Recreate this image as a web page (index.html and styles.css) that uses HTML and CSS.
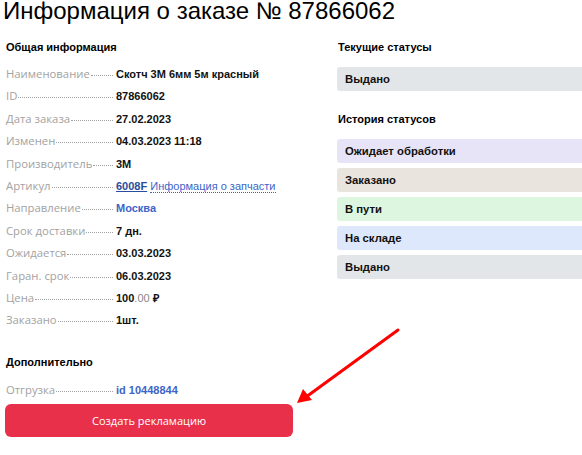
FILE: index.html
```html
<!DOCTYPE html>
<html lang="ru">
<head>
    <meta charset="UTF-8">
    <meta name="viewport" content="width=device-width, initial-scale=1.0">
    <title>Информация о заказе</title>
    <link rel="stylesheet" href="styles.css">
</head>
<body>
    <div class="page">
        <h1>Информация о заказе № 87866062</h1>
        <div class="columns">
            <div class="col-left">
                <h3>Общая информация</h3>
                <div class="rows">
                    <div class="row"><span class="label"><span>Наименование</span><i></i></span><span class="value">Скотч 3М 6мм 5м красный</span></div>
                    <div class="row"><span class="label"><span>ID</span><i></i></span><span class="value">87866062</span></div>
                    <div class="row"><span class="label"><span>Дата заказа</span><i></i></span><span class="value">27.02.2023</span></div>
                    <div class="row"><span class="label"><span>Изменен</span><i></i></span><span class="value">04.03.2023 11:18</span></div>
                    <div class="row"><span class="label"><span>Производитель</span><i></i></span><span class="value">3M</span></div>
                    <div class="row"><span class="label"><span>Артикул</span><i></i></span><span class="value"><a href="#" class="art">6008F</a> <a href="#" class="info">Информация о запчасти</a></span></div>
                    <div class="row"><span class="label"><span>Направление</span><i></i></span><span class="value link">Москва</span></div>
                    <div class="row"><span class="label"><span>Срок доставки</span><i></i></span><span class="value">7 дн.</span></div>
                    <div class="row"><span class="label"><span>Ожидается</span><i></i></span><span class="value">03.03.2023</span></div>
                    <div class="row"><span class="label"><span>Гаран. срок</span><i></i></span><span class="value">06.03.2023</span></div>
                    <div class="row"><span class="label"><span>Цена</span><i></i></span><span class="value">100<span class="cents">.00</span> ₽</span></div>
                    <div class="row"><span class="label"><span>Заказано</span><i></i></span><span class="value">1шт.</span></div>
                </div>

                <h3 class="extra">Дополнительно</h3>
                <div class="rows">
                    <div class="row"><span class="label"><span>Отгрузка</span><i></i></span><span class="value link">id 10448844</span></div>
                </div>
                <button class="btn">Создать рекламацию</button>
            </div>

            <div class="col-right">
                <h3>Текущие статусы</h3>
                <div class="status gray">Выдано</div>

                <h3 class="history">История статусов</h3>
                <div class="status-list">
                    <div class="status violet">Ожидает обработки</div>
                    <div class="status beige">Заказано</div>
                    <div class="status green">В пути</div>
                    <div class="status blue">На складе</div>
                    <div class="status gray">Выдано</div>
                </div>
            </div>
        </div>

        <!-- стрелка-указатель на кнопку -->
        <svg class="arrow" width="582" height="455" viewBox="0 0 582 455">
            <line x1="398" y1="330" x2="306" y2="397" stroke="#f00" stroke-width="3" stroke-linecap="round"/>
            <polygon points="297,403 303,389 312,400" fill="#f00"/>
        </svg>
    </div>
</body>
</html>
```

FILE: styles.css
```css
body {
    margin: 0;
    padding: 0;
    background: #ffffff;
    font-family: 'Liberation Sans', Arial, sans-serif;
    color: #111;
    overflow: hidden;
}

.page {
    position: relative;
    width: 582px;
    height: 455px;
    overflow: hidden;
}

h1 {
    margin: -3px 0 0 3px;
    font-size: 24px;
    font-weight: normal;
    line-height: 28px;
    color: #000;
    white-space: nowrap;
}

.columns {
    display: flex;
    margin-top: 15px;
}

.col-left {
    width: 288px;
    padding-left: 5px;
    flex-shrink: 0;
}

.col-right {
    width: 280px;
    margin-left: 44px;
    flex-shrink: 0;
}

h3 {
    margin: 0;
    font-size: 11px;
    font-weight: bold;
    line-height: 14px;
    color: #000;
    padding-left: 1px;
}

.rows {
    margin-top: 12px;
}

.row {
    display: flex;
    align-items: baseline;
    height: 22.4px;
}

.label {
    display: flex;
    align-items: baseline;
    width: 107px;
    padding-left: 1px;
    margin-right: 3px;
    font-family: 'Open Sans', sans-serif;
    font-size: 11.3px;
    color: #a2a2a2;
    flex-shrink: 0;
}

.label i {
    flex: 1;
    border-bottom: 1px dotted #a2a2a2;
    margin-left: 1px;
    position: relative;
    top: -2px;
}

.value {
    font-size: 11px;
    font-weight: bold;
    color: #111;
    white-space: nowrap;
}

.value .cents {
    font-weight: normal;
    color: #888;
}

.value.link {
    color: #3e64c8;
}

.art {
    color: #2a4c9e;
    text-decoration: underline;
}

.info {
    color: #3e64c8;
    font-weight: normal;
    text-decoration: none;
    border-bottom: 1px dotted #3e64c8;
}

.extra {
    margin-top: 20px;
}

.extra + .rows {
    margin-top: 13px;
}

.btn {
    display: block;
    width: 288px;
    height: 33px;
    background: #e8304a;
    color: #ffffff;
    border: none;
    border-radius: 6px;
    font-family: 'Open Sans', sans-serif;
    font-size: 11px;
    cursor: pointer;
}

.status {
    height: 24px;
    line-height: 24px;
    padding-left: 8px;
    border-radius: 3px;
    font-size: 11.3px;
    font-weight: bold;
    color: #111;
}

.col-right > .status {
    margin-top: 13px;
}

.history {
    margin-top: 21px;
}

.status-list {
    display: flex;
    flex-direction: column;
    gap: 5px;
    margin-top: 13px;
}

.violet { background: #e8e4f7; }
.beige  { background: #e9e4de; }
.green  { background: #dcf6e0; }
.blue   { background: #dde8fc; }
.gray   { background: #e3e6e9; }

.arrow {
    position: absolute;
    top: 0;
    left: 0;
    pointer-events: none;
}
```
